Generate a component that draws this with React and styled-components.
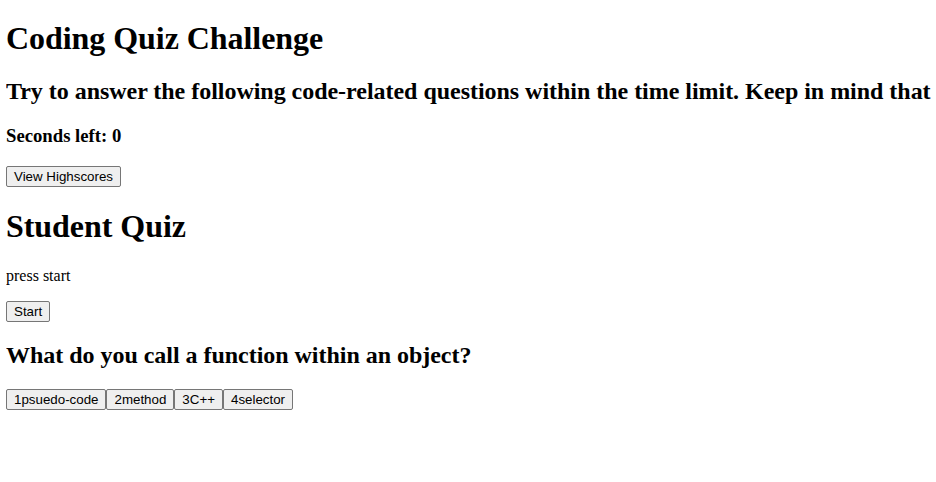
import React from "react";
import styled, { createGlobalStyle } from "styled-components";

const Global = createGlobalStyle`
  html, body { margin: 0; padding: 0; background: #fff; }
  body { margin: 0 0 8px 6px; padding-top: 8px; font-family: "Liberation Serif", "Times New Roman", serif; font-size: 16px; color: #000; }
`;

const Title = styled.h1`
  font-size: 32px;
  font-weight: bold;
  margin: ${(p) => (p.$first ? "11.6px" : "21.44px")} 0 21.44px;
  letter-spacing: -0.05px;
`;

const Intro = styled.h2`
  font-size: 24px;
  font-weight: bold;
  margin: 19.92px 0;
  white-space: nowrap;
  letter-spacing: -0.03px;
`;

const Timer = styled.h3`
  font-size: 18.72px;
  font-weight: bold;
  margin: 18.72px 0;
`;

const Question = styled.h2`
  font-size: 24px;
  font-weight: bold;
  margin: 19.92px 0;
  letter-spacing: -0.03px;
`;

const Note = styled.p`
  font-size: 16px;
  margin: 16px 0;
`;

const Row = styled.div`
  display: flex;
  margin: ${(p) => p.$m || "16px"} 0;
`;

const Btn = styled.button`
  font-family: "Liberation Sans", Arial, sans-serif;
  font-size: 13.33px;
  line-height: 15px;
  padding: 2px 7px;
  border: 1px solid #767676;
  border-radius: 2px;
  background: #efefef;
  color: #000;
`;

export default function App() {
  return (
    <>
      <Global />
      <Title $first>Coding Quiz Challenge</Title>
      <Intro>
        Try to answer the following code-related questions within the time limit. Keep in mind that
      </Intro>
      <Timer>Seconds left: 0</Timer>
      <Row $m="19px">
        <Btn>View Highscores</Btn>
      </Row>
      <Title>Student Quiz</Title>
      <Note>press start</Note>
      <Row $m="15px">
        <Btn>Start</Btn>
      </Row>
      <Question>What do you call a function within an object?</Question>
      <Row $m="20px">
        <Btn>1psuedo-code</Btn>
        <Btn>2method</Btn>
        <Btn>3C++</Btn>
        <Btn>4selector</Btn>
      </Row>
    </>
  );
}
